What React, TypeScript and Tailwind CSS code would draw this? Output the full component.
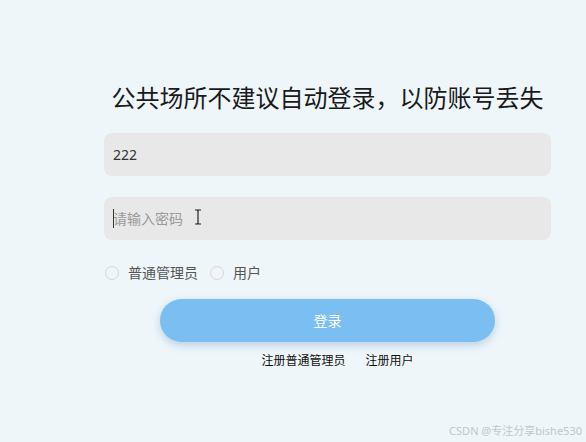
import React, { useState } from 'react';

const font = { fontFamily: '"Noto Sans", "Noto Sans CJK SC", sans-serif' };

export default function App() {
  const [username, setUsername] = useState('222');
  const [password, setPassword] = useState('');
  const [role, setRole] = useState('');

  return (
    <div className="relative h-[442px] w-[586px] overflow-hidden bg-[#eef6fa]" style={font}>
      <div className="ml-[104px] w-[447px] pt-[80px]">
        <h1 className="text-center text-[24px] leading-[36px] font-normal text-[#1a1a1a]">
          公共场所不建议自动登录，以防账号丢失
        </h1>

        <input
          className="mt-[17px] block h-[43px] w-full rounded-[8px] bg-[#e8e8e8] px-[9px] text-[14px] text-[#333] outline-none"
          value={username}
          onChange={e => setUsername(e.target.value)}
        />

        <div className="relative mt-[21px]">
          <input
            type="password"
            placeholder="请输入密码"
            className="block h-[43px] w-full rounded-[8px] bg-[#e8e8e8] px-[9px] text-[14px] text-[#333] outline-none placeholder:text-[#9a9a9a]"
            value={password}
            onChange={e => setPassword(e.target.value)}
          />
          {/* text caret + mouse I-beam */}
          <span className="absolute left-[9px] top-[12px] h-[19px] w-px bg-[#333]" />
          <svg className="absolute left-[90px] top-[12px]" width="8" height="16" viewBox="0 0 8 16">
            <path d="M1 1h2.5L4 2l.5-1H7M4 2v12M1 15h2.5L4 14l.5 1H7" fill="none" stroke="#222" strokeWidth="1.2" />
          </svg>
        </div>

        <div className="mt-[22px] flex items-center pl-[1px] text-[14px] text-[#555]">
          {['普通管理员', '用户'].map(r => (
            <label key={r} className="mr-[12px] flex cursor-pointer items-center" onClick={() => setRole(r)}>
              <span className="mr-[9px] flex h-[14px] w-[14px] items-center justify-center rounded-full border border-[#d4d8dc] bg-[#f2f5f7]">
                {role === r && <span className="h-[6px] w-[6px] rounded-full bg-[#7bbff2]" />}
              </span>
              {r}
            </label>
          ))}
        </div>

        <button className="mx-auto mt-[16px] block h-[43px] w-[335px] rounded-full bg-[#7bbff2] text-[14px] text-white shadow-[0_3px_8px_rgba(80,140,190,0.35)]">
          登录
        </button>

        <div className="mt-[10px] flex justify-center gap-[20px] pl-[20px] text-[12px] text-[#111]">
          <span>注册普通管理员</span>
          <span>注册用户</span>
        </div>
      </div>

      <div className="absolute right-[4px] bottom-[3px] text-[11px] text-[#c0c6cb]">CSDN @专注分享bishe530</div>
    </div>
  );
}
